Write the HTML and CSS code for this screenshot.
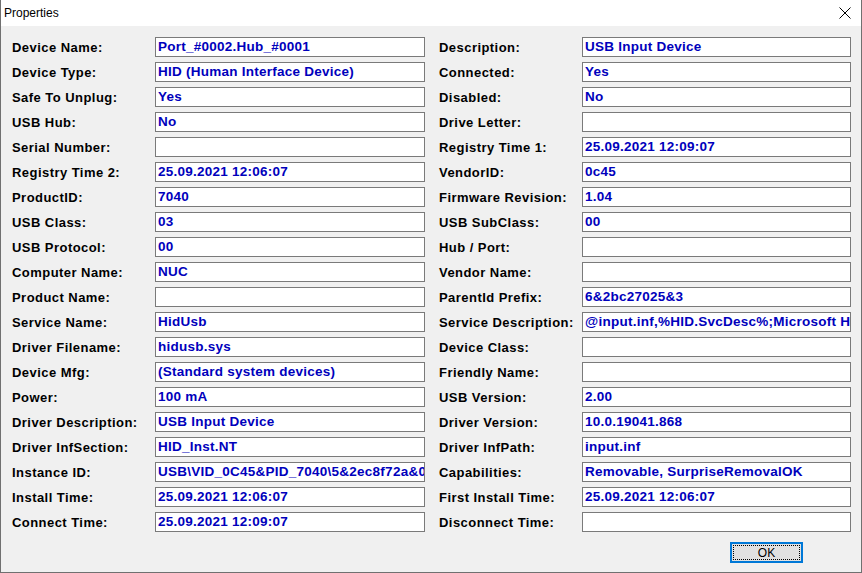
FILE: index.html
```html
<!DOCTYPE html>
<html lang="en">
<head>
    <meta charset="UTF-8">
    <title>Properties</title>
    <link rel="stylesheet" href="styles.css">
</head>
<body>
    <div class="window">
        <div class="titlebar">
            <span class="title">Properties</span>
            <svg class="close" width="12" height="12" viewBox="0 0 12 12">
                <path d="M0.5 0.5 L11.5 11.5 M11.5 0.5 L0.5 11.5" stroke="#000" stroke-width="1" fill="none"/>
            </svg>
        </div>
        <div class="content">
            <div class="grid">
                <label>Device Name:</label><div class="field">Port_#0002.Hub_#0001</div>
                <label>Description:</label><div class="field">USB Input Device</div>

                <label>Device Type:</label><div class="field">HID (Human Interface Device)</div>
                <label>Connected:</label><div class="field">Yes</div>

                <label>Safe To Unplug:</label><div class="field">Yes</div>
                <label>Disabled:</label><div class="field">No</div>

                <label>USB Hub:</label><div class="field">No</div>
                <label>Drive Letter:</label><div class="field"></div>

                <label>Serial Number:</label><div class="field"></div>
                <label>Registry Time 1:</label><div class="field">25.09.2021 12:09:07</div>

                <label>Registry Time 2:</label><div class="field">25.09.2021 12:06:07</div>
                <label>VendorID:</label><div class="field">0c45</div>

                <label>ProductID:</label><div class="field">7040</div>
                <label>Firmware Revision:</label><div class="field">1.04</div>

                <label>USB Class:</label><div class="field">03</div>
                <label>USB SubClass:</label><div class="field">00</div>

                <label>USB Protocol:</label><div class="field">00</div>
                <label>Hub / Port:</label><div class="field"></div>

                <label>Computer Name:</label><div class="field">NUC</div>
                <label>Vendor Name:</label><div class="field"></div>

                <label>Product Name:</label><div class="field"></div>
                <label>ParentId Prefix:</label><div class="field">6&amp;2bc27025&amp;3</div>

                <label>Service Name:</label><div class="field">HidUsb</div>
                <label>Service Description:</label><div class="field">@input.inf,%HID.SvcDesc%;Microsoft HID Class Driver</div>

                <label>Driver Filename:</label><div class="field">hidusb.sys</div>
                <label>Device Class:</label><div class="field"></div>

                <label>Device Mfg:</label><div class="field">(Standard system devices)</div>
                <label>Friendly Name:</label><div class="field"></div>

                <label>Power:</label><div class="field">100 mA</div>
                <label>USB Version:</label><div class="field">2.00</div>

                <label>Driver Description:</label><div class="field">USB Input Device</div>
                <label>Driver Version:</label><div class="field">10.0.19041.868</div>

                <label>Driver InfSection:</label><div class="field">HID_Inst.NT</div>
                <label>Driver InfPath:</label><div class="field">input.inf</div>

                <label>Instance ID:</label><div class="field">USB\VID_0C45&amp;PID_7040\5&amp;2ec8f72a&amp;0&amp;2</div>
                <label>Capabilities:</label><div class="field">Removable, SurpriseRemovalOK</div>

                <label>Install Time:</label><div class="field">25.09.2021 12:06:07</div>
                <label>First Install Time:</label><div class="field">25.09.2021 12:06:07</div>

                <label>Connect Time:</label><div class="field">25.09.2021 12:09:07</div>
                <label>Disconnect Time:</label><div class="field"></div>
            </div>
            <div class="buttons">
                <button class="ok-btn"><span>OK</span></button>
            </div>
        </div>
    </div>
</body>
</html>
```

FILE: styles.css
```css
* {
    margin: 0;
    padding: 0;
    box-sizing: border-box;
}

body {
    width: 862px;
    height: 573px;
    overflow: hidden;
    background: #f0f0f0;
    font-family: 'Liberation Sans', Arial, sans-serif;
}

.window {
    width: 862px;
    height: 573px;
    border: 1px solid #707070;
    border-top: none;
    background: #f0f0f0;
    display: flex;
    flex-direction: column;
}

.titlebar {
    height: 26px;
    background: #fff;
    display: flex;
    align-items: center;
    justify-content: space-between;
    padding: 0 10px 0 3px;
}

.title {
    font-family: 'Liberation Sans', Arial, sans-serif;
    font-size: 12px;
    color: #000;
}

.close {
    display: block;
}

.content {
    padding: 11px 9px 0 11px;
}

.grid {
    display: grid;
    grid-template-columns: 143px 270px 143px 269px;
    grid-auto-rows: 20px;
    row-gap: 5px;
    column-gap: 0;
}

.grid label:nth-child(4n+3) {
    margin-left: 14px;
}

.grid label {
    font-size: 13px;
    font-weight: bold;
    letter-spacing: 0.45px;
    color: #000;
    display: flex;
    align-items: center;
    white-space: nowrap;
}

.field {
    background: #fff;
    border: 1px solid #7a7a7a;
    color: #0000bc;
    font-size: 13.5px;
    font-weight: bold;
    letter-spacing: 0.25px;
    line-height: 18px;
    padding: 0 2px;
    white-space: nowrap;
    overflow: hidden;
}

.grid .field:nth-child(4n) {
    margin-left: 14px;
    width: 269px;
}

.buttons {
    display: flex;
    justify-content: flex-end;
    padding: 10px 49px 0 0;
}

.ok-btn {
    width: 73px;
    height: 21px;
    background: #e1e1e1;
    border: 2px solid #0078d7;
    padding: 1px;
    font-family: 'Liberation Sans', Arial, sans-serif;
    font-size: 12px;
    color: #000;
}

.ok-btn span {
    display: flex;
    align-items: center;
    justify-content: center;
    width: 100%;
    height: 100%;
    border: 1px dotted #000;
}
```
